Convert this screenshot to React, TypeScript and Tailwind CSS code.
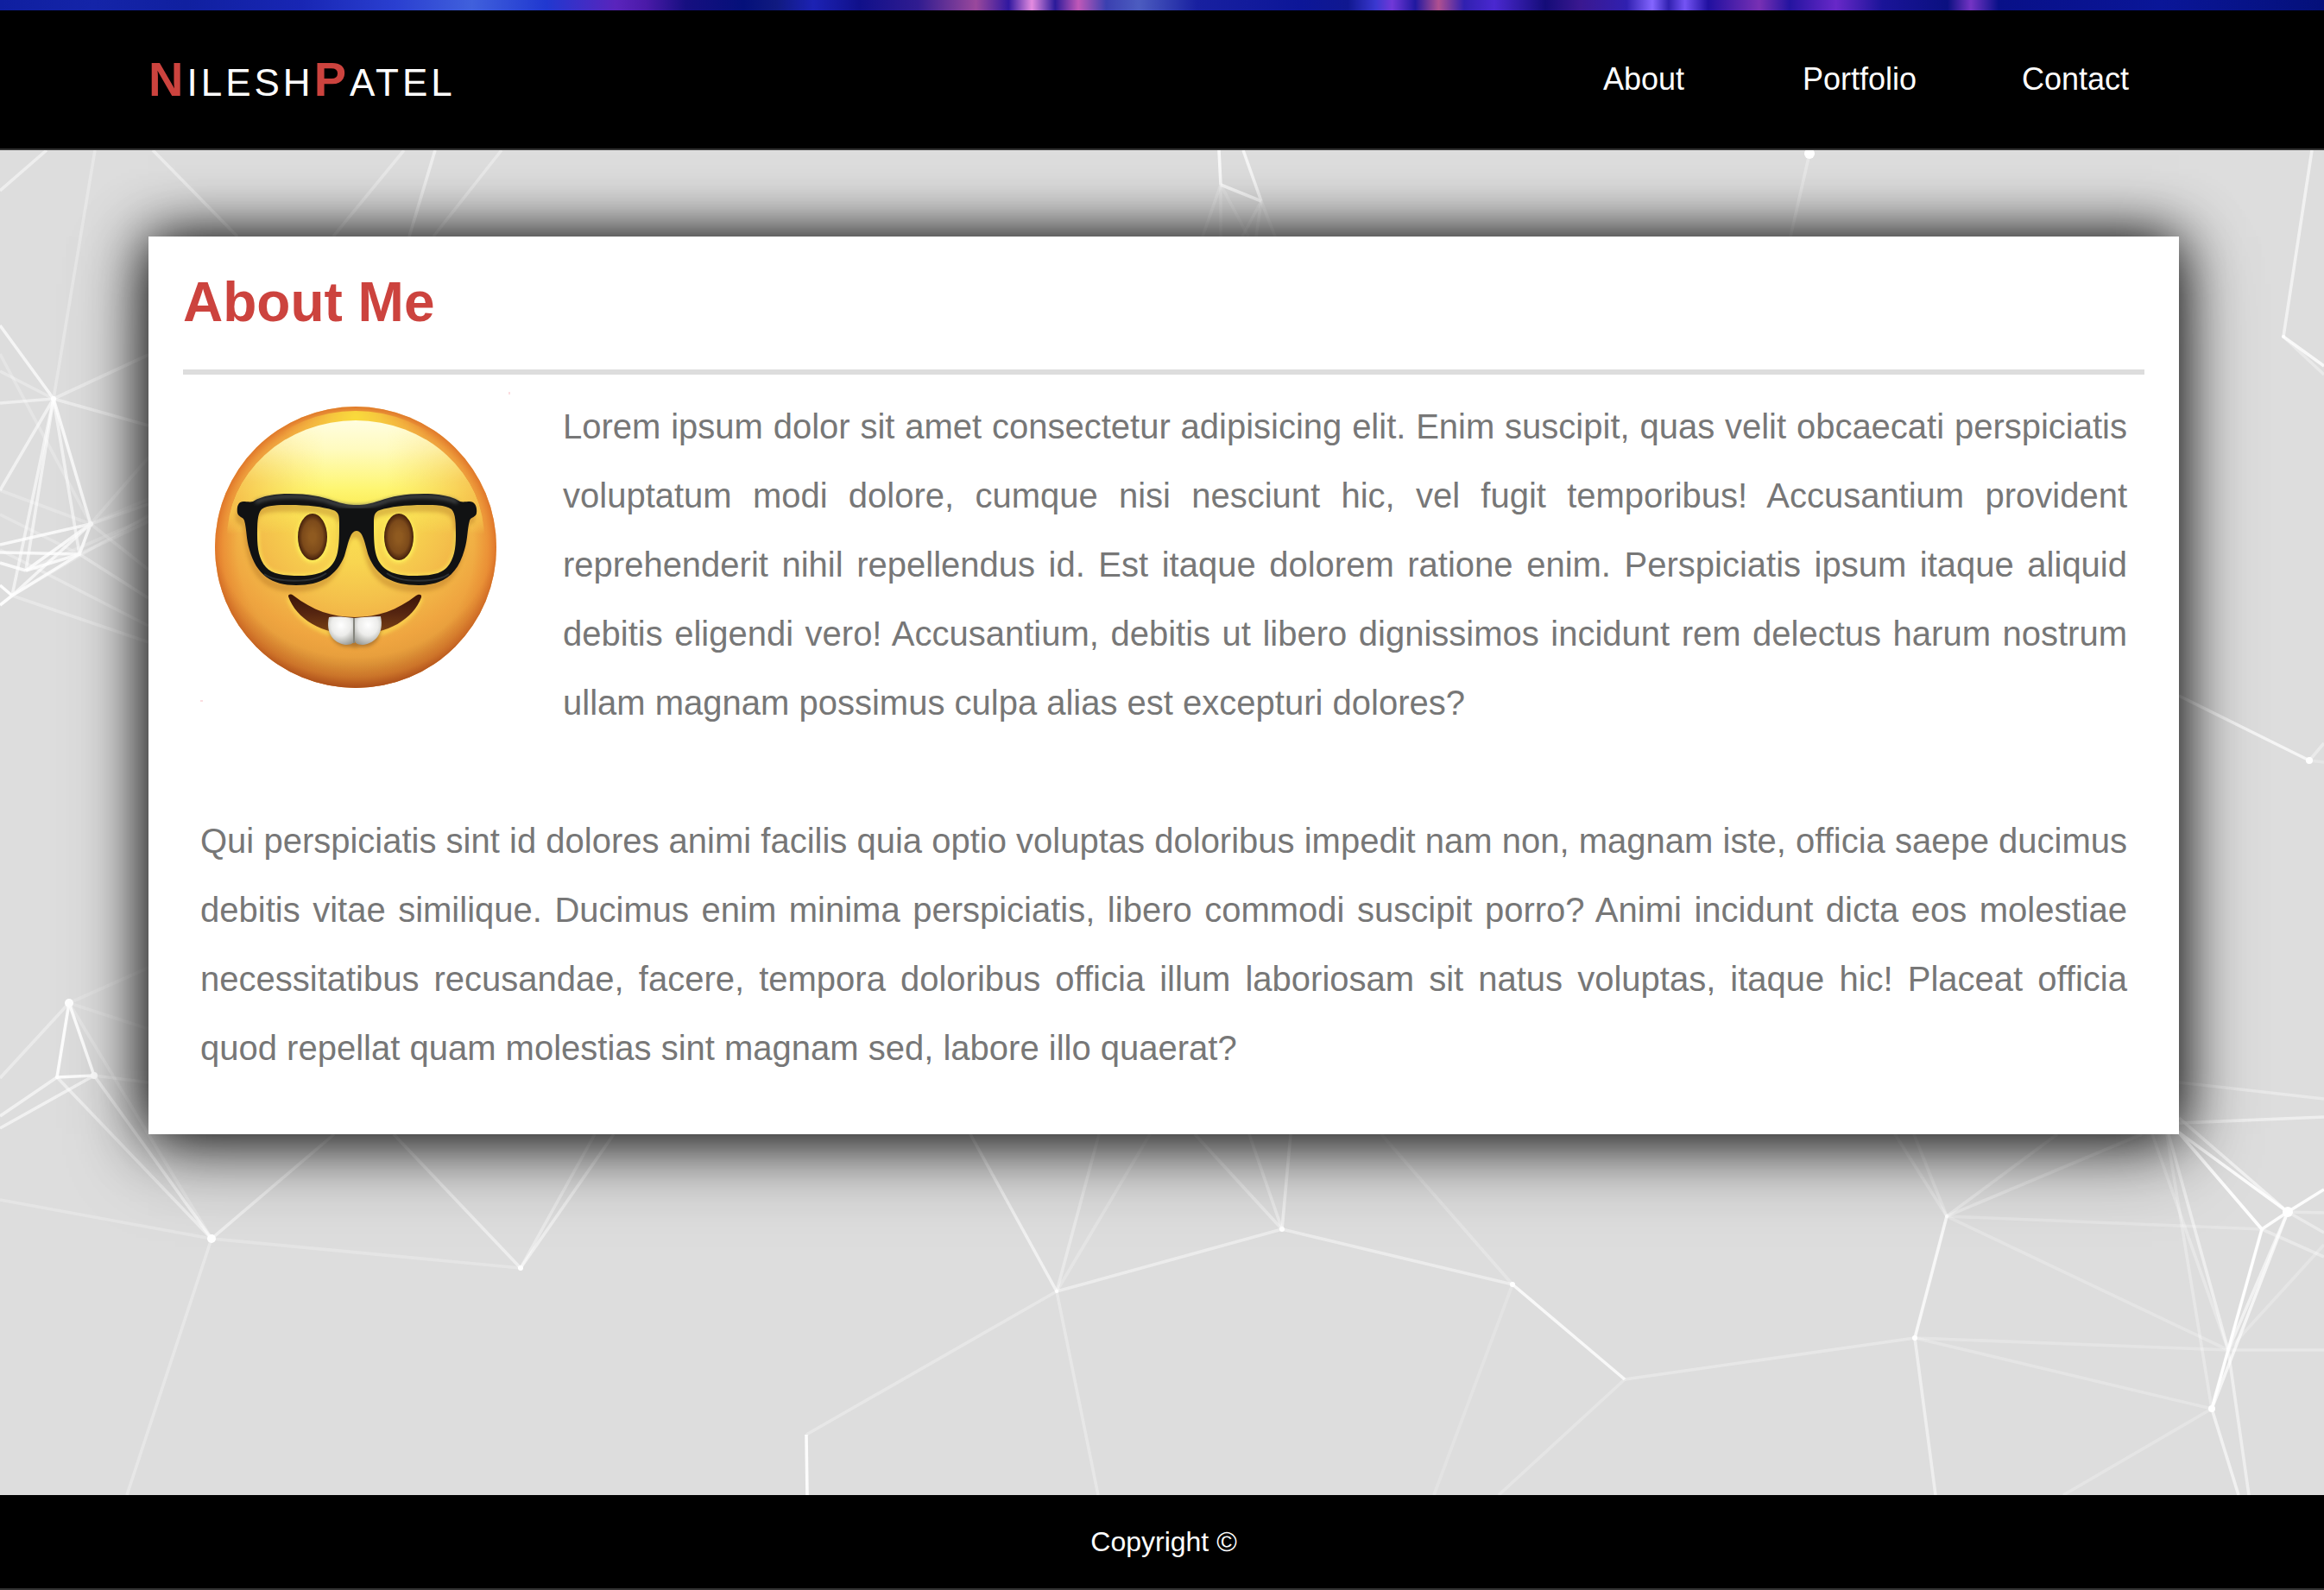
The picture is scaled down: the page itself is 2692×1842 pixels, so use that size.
const NAV_LINKS = ["About", "Portfolio", "Contact"];

type Segment = [number, number, number, number, number];

// x1, y1, x2, y2, opacity
const SEGMENTS: Segment[] = [
  [0, 221, 54, 174, 0.5], [110, 174, 62, 462, 0.3], [0, 377, 62, 462, 0.7], [0, 430, 62, 462, 0.3],
  [0, 467, 62, 462, 0.5], [0, 568, 62, 462, 0.6], [62, 462, 105, 607, 0.8], [62, 462, 92, 642, 0.6],
  [62, 462, 30, 661, 0.6], [62, 462, 14, 690, 0.6], [62, 462, 172, 411, 0.4], [62, 462, 172, 493, 0.45],
  [0, 410, 105, 607, 0.25], [105, 607, 92, 642, 0.9], [105, 607, 30, 661, 0.8], [105, 607, 14, 690, 0.7],
  [0, 631, 105, 607, 0.8], [105, 607, 172, 578, 0.2], [105, 607, 172, 530, 0.25], [105, 607, 172, 584, 0.3],
  [105, 607, 172, 660, 0.3], [92, 642, 30, 661, 0.8], [92, 642, 14, 690, 0.8], [0, 640, 92, 642, 0.8],
  [92, 642, 172, 693, 0.4], [92, 642, 172, 604, 0.3], [30, 661, 172, 600, 0.25], [0, 568, 105, 607, 0.25],
  [0, 596, 92, 642, 0.25], [0, 652, 30, 661, 0.8], [0, 678, 14, 690, 0.9], [0, 701, 14, 690, 0.9],
  [14, 690, 172, 744, 0.3], [0, 637, 172, 725, 0.3], [14, 690, 172, 597, 0.25],
  [177, 174, 275, 274, 0.45], [468, 174, 386, 274, 0.35], [504, 174, 474, 274, 0.5], [581, 174, 502, 274, 0.35],
  [1412, 174, 1414, 214, 0.8], [1440, 174, 1461, 233, 0.7], [1414, 214, 1461, 233, 0.8],
  [1414, 214, 1393, 274, 0.25], [1414, 214, 1414, 274, 0.25], [1414, 214, 1446, 274, 0.2],
  [1461, 233, 1439, 274, 0.25], [1461, 233, 1455, 274, 0.25], [1461, 233, 1477, 274, 0.25],
  [2096, 178, 2074, 274, 0.3], [2678, 174, 2645, 390, 0.6], [2645, 390, 2692, 424, 0.8], [2645, 390, 2692, 434, 0.35],
  [2524, 806, 2675, 881, 0.7], [2675, 881, 2692, 861, 0.4], [2675, 881, 2692, 883, 0.25],
  [80, 1162, 66, 1248, 0.9], [80, 1162, 109, 1246, 0.9], [66, 1248, 109, 1246, 0.9], [80, 1162, 172, 1121, 0.2],
  [80, 1162, 172, 1192, 0.2], [80, 1162, 0, 1249, 0.4], [80, 1162, 245, 1435, 0.25], [66, 1248, 0, 1293, 0.6],
  [109, 1246, 0, 1307, 0.6], [66, 1248, 245, 1435, 0.5], [109, 1246, 245, 1435, 0.6], [109, 1246, 172, 1254, 0.3],
  [245, 1435, 0, 1390, 0.25], [245, 1435, 603, 1469, 0.25], [245, 1435, 387, 1314, 0.5], [245, 1435, 147, 1732, 0.3],
  [603, 1469, 456, 1314, 0.5], [603, 1469, 689, 1314, 0.4], [603, 1469, 711, 1314, 0.5],
  [934, 1662, 935, 1732, 0.9], [934, 1662, 1224, 1496, 0.3], [1224, 1496, 1485, 1424, 0.45],
  [1485, 1424, 1752, 1488, 0.45], [1752, 1488, 1882, 1598, 0.8], [1224, 1496, 1124, 1314, 0.6],
  [1224, 1496, 1273, 1314, 0.35], [1224, 1496, 1332, 1314, 0.25], [1224, 1496, 1272, 1732, 0.3],
  [1485, 1424, 1384, 1314, 0.4], [1485, 1424, 1447, 1314, 0.4], [1485, 1424, 1495, 1314, 0.5],
  [1752, 1488, 1600, 1314, 0.25], [1752, 1488, 1661, 1732, 0.2], [1882, 1598, 1736, 1732, 0.25],
  [1882, 1598, 2218, 1550, 0.3], [2255, 1409, 2218, 1550, 0.75], [2218, 1550, 2581, 1564, 0.25],
  [2218, 1550, 2562, 1632, 0.25], [2218, 1550, 2242, 1732, 0.5], [2255, 1409, 2620, 1424, 0.25],
  [2255, 1409, 2581, 1564, 0.25], [2255, 1409, 2195, 1314, 0.3], [2255, 1409, 2217, 1314, 0.3],
  [2255, 1409, 2383, 1314, 0.35], [2255, 1409, 2481, 1314, 0.35], [2650, 1404, 2524, 1295, 0.6],
  [2650, 1404, 2524, 1312, 0.9], [2650, 1404, 2620, 1424, 0.9], [2650, 1404, 2692, 1378, 0.9],
  [2650, 1404, 2581, 1564, 0.6], [2650, 1404, 2562, 1632, 0.7], [2650, 1404, 2692, 1405, 0.3],
  [2650, 1404, 2692, 1428, 0.4], [2620, 1424, 2522, 1310, 0.9], [2620, 1424, 2526, 1314, 0.4],
  [2620, 1424, 2692, 1456, 0.35], [2620, 1424, 2562, 1632, 0.95], [2581, 1564, 2512, 1314, 0.5],
  [2581, 1564, 2493, 1314, 0.3], [2562, 1632, 2510, 1314, 0.3], [2581, 1564, 2692, 1442, 0.25],
  [2581, 1564, 2692, 1564, 0.3], [2581, 1564, 2605, 1732, 0.5], [2562, 1632, 2593, 1732, 0.6],
  [2562, 1632, 2390, 1732, 0.25], [2524, 1254, 2692, 1273, 0.35], [2524, 1301, 2692, 1294, 0.5],
];

// cx, cy, radius
const NODES: [number, number, number][] = [
  [2096, 178, 6], [62, 462, 3], [105, 607, 3], [92, 642, 2], [2645, 390, 2], [2675, 881, 4], [80, 1162, 5],
  [66, 1248, 2], [109, 1246, 4], [245, 1435, 5], [603, 1469, 3], [1224, 1496, 2], [1485, 1424, 3],
  [1752, 1488, 3], [2255, 1409, 2], [2218, 1550, 3], [2650, 1404, 6], [2620, 1424, 2], [2562, 1632, 4],
];

function NetworkBackdrop() {
  return (
    <svg
      aria-hidden="true"
      className="absolute inset-0 h-full w-full"
      viewBox="0 174 2692 1558"
      preserveAspectRatio="xMidYMid slice"
    >
      <g stroke="#fff" strokeWidth="3.6">
        {SEGMENTS.map(([x1, y1, x2, y2, o], i) => (
          <line key={i} x1={x1} y1={y1} x2={x2} y2={y2} strokeOpacity={o} />
        ))}
      </g>
      <g fill="#fff">
        {NODES.map(([cx, cy, r], i) => (
          <circle key={i} cx={cx} cy={cy} r={r} />
        ))}
      </g>
    </svg>
  );
}

const LENS =
  "M71 136C78 131 90 131 103 131C124 131 142 133 154 137C160 139 161 143 161 151C161 166 161 176 159 186C155 204 142 213 116 213C96 213 83 211 76 203C68 194 66 181 66 167C66 153 66 141 71 136Z";
const FRAME =
  "M43 140C42 133 44 127 50 127C53 127 58 128 61 127C72 120 88 118 103 118C125 118 140 121 154 126C166 130 172 131 181 131C190 131 196 130 208 126C222 121 237 118 259 118C274 118 290 120 301 127C304 128 309 127 312 127C318 127 321 133 320 140C320 145 313 145 312 149C309 160 310 170 306 183C298 212 281 224 253 224C222 224 204 213 195 190C191 178 189 161 181 161C173 161 171 178 167 190C158 213 140 224 111 224C83 224 65 212 57 183C53 170 54 160 51 149C50 145 44 145 43 140Z";

function NerdFace() {
  return (
    <svg
      role="img"
      aria-label="Smiling face with glasses"
      viewBox="0 0 360 360"
      className="float-left mr-15 h-90 w-90"
    >
      <defs>
        <radialGradient id="skin" gradientUnits="userSpaceOnUse" cx="180" cy="130" r="225">
          <stop offset="0" stopColor="#fbe553" />
          <stop offset="0.3" stopColor="#f8d550" />
          <stop offset="0.5" stopColor="#f4c04b" />
          <stop offset="0.72" stopColor="#efa540" />
          <stop offset="0.85" stopColor="#e29a3a" />
          <stop offset="1" stopColor="#cf8431" />
        </radialGradient>
        <radialGradient id="rim" gradientUnits="userSpaceOnUse" cx="180" cy="180" r="163">
          <stop offset="0.84" stopColor="#e88730" stopOpacity="0" />
          <stop offset="0.94" stopColor="#e87f2e" stopOpacity="0.5" />
          <stop offset="1" stopColor="#dd7128" stopOpacity="0.9" />
        </radialGradient>
        <radialGradient id="shade" gradientUnits="userSpaceOnUse" cx="180" cy="140" r="204">
          <stop offset="0.82" stopColor="#a34c18" stopOpacity="0" />
          <stop offset="0.93" stopColor="#a34c18" stopOpacity="0.35" />
          <stop offset="1" stopColor="#9c4416" stopOpacity="0.8" />
        </radialGradient>
        <radialGradient id="crown" gradientUnits="userSpaceOnUse" cx="180" cy="30" r="90">
          <stop offset="0" stopColor="#f9dc3c" />
          <stop offset="0.3" stopColor="#f8d23e" stopOpacity="0.8" />
          <stop offset="1" stopColor="#f6b040" stopOpacity="0" />
        </radialGradient>
        <linearGradient id="shine" x1="0" y1="33" x2="0" y2="165" gradientUnits="userSpaceOnUse">
          <stop offset="0" stopColor="#fffde0" />
          <stop offset="0.25" stopColor="#fffbc0" />
          <stop offset="0.6" stopColor="#fef672" />
          <stop offset="0.75" stopColor="#fcf05e" stopOpacity="0.8" />
          <stop offset="1" stopColor="#fbe858" stopOpacity="0" />
        </linearGradient>
        <linearGradient id="shineEdge" x1="30" y1="0" x2="330" y2="0" gradientUnits="userSpaceOnUse">
          <stop offset="0" stopColor="#f3b448" stopOpacity="0.9" />
          <stop offset="0.38" stopColor="#f8d850" stopOpacity="0" />
          <stop offset="0.62" stopColor="#f8d850" stopOpacity="0" />
          <stop offset="1" stopColor="#f3b448" stopOpacity="0.9" />
        </linearGradient>
        <linearGradient id="fadeDown" x1="0" y1="30" x2="0" y2="165" gradientUnits="userSpaceOnUse">
          <stop offset="0" stopColor="#fff" stopOpacity="0.1" />
          <stop offset="0.55" stopColor="#fff" />
          <stop offset="0.75" stopColor="#fff" />
          <stop offset="1" stopColor="#fff" stopOpacity="0" />
        </linearGradient>
        <mask id="edgeMask">
          <rect width="360" height="360" fill="url(#fadeDown)" />
        </mask>
        <radialGradient id="iris">
          <stop offset="0.2" stopColor="#8f5a20" />
          <stop offset="0.7" stopColor="#7c4a1a" />
          <stop offset="1" stopColor="#45200c" />
        </radialGradient>
        <linearGradient id="mouth" x1="0" y1="235" x2="0" y2="280" gradientUnits="userSpaceOnUse">
          <stop offset="0" stopColor="#3c1408" />
          <stop offset="0.45" stopColor="#542410" />
          <stop offset="1" stopColor="#7a4216" />
        </linearGradient>
        <radialGradient id="tooth" cx="0.5" cy="0.3" r="0.75">
          <stop offset="0" stopColor="#ffffff" />
          <stop offset="0.5" stopColor="#ececea" />
          <stop offset="1" stopColor="#9b9c96" />
        </radialGradient>
        <filter id="soft" x="-20%" y="-20%" width="140%" height="140%">
          <feGaussianBlur stdDeviation="2" />
        </filter>
        <mask id="lenses">
          <rect width="360" height="360" fill="#fff" />
          <path d={LENS} fill="#000" />
          <path d={LENS} transform="matrix(-1 0 0 1 362 0)" fill="#000" />
        </mask>
      </defs>

      <circle cx="180" cy="180" r="163" fill="url(#skin)" />
      <circle cx="180" cy="180" r="163" fill="url(#rim)" />
      <circle cx="180" cy="180" r="163" fill="url(#shade)" />
      <clipPath id="head">
        <circle cx="180" cy="180" r="158" />
      </clipPath>
      <g clipPath="url(#head)">
        <ellipse cx="180" cy="30" rx="90" ry="40" fill="url(#crown)" filter="url(#soft)" />
      </g>
      <ellipse cx="180" cy="170" rx="149" ry="137" fill="url(#shine)" />
      <ellipse cx="180" cy="170" rx="149" ry="137" fill="url(#shineEdge)" mask="url(#edgeMask)" />

      <g transform="translate(-2 8)" opacity="0.35" filter="url(#soft)">
        <path d={FRAME} fill="#a8661c" mask="url(#lenses)" />
      </g>
      <g fill="#fdf05a" filter="url(#soft)">
        <ellipse cx="130" cy="170" rx="19" ry="28" />
        <ellipse cx="230" cy="170" rx="19" ry="28" />
      </g>
      <ellipse cx="130" cy="168" rx="17" ry="27" fill="url(#iris)" />
      <ellipse cx="230" cy="168" rx="17" ry="27" fill="url(#iris)" />
      <g fill="none" stroke="#fbec58" strokeWidth="3" filter="url(#soft)">
        <path d="M66 160C66 181 68 194 76 203C83 211 96 213 116 213C142 213 155 204 159 186C161 176 161 166 161 151" />
        <path d="M296 160C296 181 294 194 286 203C279 211 266 213 246 213C220 213 207 204 203 186C201 176 201 166 201 151" />
      </g>
      <g mask="url(#lenses)">
        <path d={FRAME} fill="#111213" />
        <path
          d="M64 128C80 120 125 118 151 128C170 134 192 134 211 128C237 118 282 120 298 128"
          fill="none"
          stroke="#565a5c"
          strokeWidth="3"
          filter="url(#soft)"
        />
        <path
          d="M74 211C86 220 128 223 146 210M288 211C276 220 234 223 216 210"
          fill="none"
          stroke="#2c3033"
          strokeWidth="2"
        />
      </g>

      <path
        d="M102 239C113 266 143 284 179 284C215 284 245 266 256 239"
        fill="none"
        stroke="#fbd850"
        strokeWidth="4"
        filter="url(#soft)"
      />
      <path
        d="M102 237C102 234 105 234 108 236C130 253 153 261 179 261C205 261 228 253 250 236C253 234 257 234 256 238C247 263 217 281 179 281C141 281 111 263 102 237Z"
        fill="url(#mouth)"
      />
      <path
        d="M150 264C146 284 158 296 172 295C184 297 178 296 186 295C202 297 212 284 208 266Z"
        fill="#8a5a22"
        opacity="0.6"
        filter="url(#soft)"
      />
      <path d="M149 261C158 260 170 261 178 262L178 288C178 292 173 293 168 293C154 291 145 279 149 261Z" fill="url(#tooth)" />
      <path d="M209 260C200 260 188 261 179 262L179 288C179 292 184 293 189 293C203 291 213 279 209 260Z" fill="url(#tooth)" />
      <path d="M178 262V291" stroke="#85857d" strokeWidth="2" />

      <rect x="357" y="0" width="2" height="3" fill="#fbdde0" />
      <rect x="0" y="357" width="3" height="2" fill="#fbdde0" />
    </svg>
  );
}

function Header() {
  return (
    <header className="flex h-[162px] items-center justify-between border-b-2 border-[#333] bg-black pr-[168px] pl-[172px] text-white">
      <h1 className="text-[56px] leading-none tracking-[4px]">
        <span className="font-bold text-[#cc433e]">N</span>
        <span className="text-[44px]">ILESH</span>
        <span className="font-bold text-[#cc433e]">P</span>
        <span className="text-[44px]">ATEL</span>
      </h1>
      <nav>
        <ul className="grid grid-cols-3 gap-2.5 text-center text-4xl">
          {NAV_LINKS.map((label) => (
            <li key={label} className="w-60">
              <a href={`#${label.toLowerCase()}`}>{label}</a>
            </li>
          ))}
        </ul>
      </nav>
    </header>
  );
}

export default function App() {
  return (
    <div className="flex min-h-screen flex-col bg-[#ddd] font-['Liberation_Sans',Arial,sans-serif]">
      <div className="h-3 bg-[linear-gradient(90deg,#0f1fa0_0%,#1424a8_4%,#1020a0_8%,#1826b4_13%,#2a3fd0_17%,#4060dc_20.3%,#2038d0_23.5%,#5a24bc_26.5%,#4a1aa8_27.8%,#160f80_29.5%,#04107a_32%,#101a80_33.4%,#1c22b4_35%,#10108a_37%,#301c90_39.5%,#9a489c_42%,#3018a0_43.4%,#e48ce0_44.4%,#2a1a9a_45.4%,#c058b8_46.4%,#3a40b0_47.6%,#4c5cc0_49%,#1820a0_51.5%,#0c1698_56%,#101890_58%,#3a38d0_59.2%,#7038d8_59.9%,#2018a0_60.9%,#b05090_61.9%,#3020b0_63%,#4a28d0_64.3%,#140c78_66.5%,#3a1890_68%,#3020b0_70%,#8466ff_71.1%,#3020b0_71.8%,#7454f4_72.5%,#2010a0_73.5%,#7830b4_75.7%,#2414a0_77%,#6828c8_79%,#1a1498_81%,#0a1080_83.8%,#7434c4_84.8%,#081088_86%,#0a1698_93%,#04107a_100%)]" />
      <Header />
      <main className="relative flex-1 overflow-hidden pt-[100px] pr-[168px] pb-[100px] pl-[172px]">
        <NetworkBackdrop />
        <section
          id="about"
          className="relative bg-white px-10 pt-10 pb-15 shadow-[0_0_64px_#000,0_24px_88px_rgba(0,0,0,0.35)]"
        >
          <h2 className="border-b-6 border-[#ddd] pb-[42px] text-[64px] leading-[72px] font-bold text-[#cc433e]">
            About Me
          </h2>
          <div className="px-5 pt-5 text-justify text-[40px] leading-20 text-[#777]">
            <NerdFace />
            <p>
              Lorem ipsum dolor sit amet consectetur adipisicing elit. Enim suscipit, quas velit obcaecati
              perspiciatis voluptatum modi dolore, cumque nisi nesciunt hic, vel fugit temporibus! Accusantium
              provident reprehenderit nihil repellendus id. Est itaque dolorem ratione enim. Perspiciatis ipsum
              itaque aliquid debitis eligendi vero! Accusantium, debitis ut libero dignissimos incidunt rem
              delectus harum nostrum ullam magnam possimus culpa alias est excepturi dolores?
            </p>
            <p className="mt-20">
              Qui perspiciatis sint id dolores animi facilis quia optio voluptas doloribus impedit nam non,
              magnam iste, officia saepe ducimus debitis vitae similique. Ducimus enim minima perspiciatis,
              libero commodi suscipit porro? Animi incidunt dicta eos molestiae necessitatibus recusandae,
              facere, tempora doloribus officia illum laboriosam sit natus voluptas, itaque hic! Placeat officia
              quod repellat quam molestias sint magnam sed, labore illo quaerat?
            </p>
          </div>
        </section>
      </main>
      <footer className="flex h-[110px] items-center justify-center border-b-2 border-[#333] bg-black pr-[168px] pl-[172px] text-[32px] text-white">
        <p>Copyright &copy;</p>
      </footer>
    </div>
  );
}
